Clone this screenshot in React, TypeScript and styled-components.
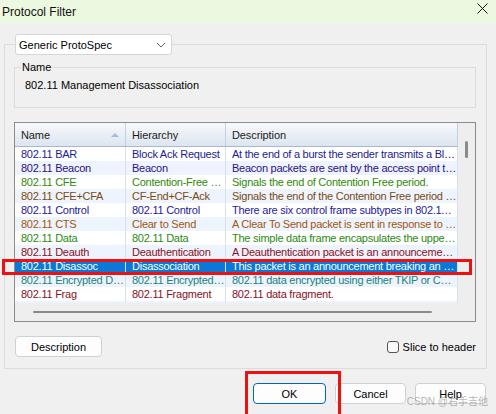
import React from 'react';
import styled, {createGlobalStyle} from 'styled-components';

const GlobalStyle = createGlobalStyle`
    html, body {
        margin: 0;
        padding: 0;
        background: #f0f0f0;
    }
    body {
        width: 496px;
        height: 414px;
        overflow: hidden;
        font-family: 'Liberation Sans', 'Noto Sans', sans-serif;
        color: #000;
    }
`;

type Row = {
    name: string;
    hierarchy: string;
    description: string;
    color: string;
    selected?: boolean;
};

const rows: Row[] = [
    {name: '802.11 BAR', hierarchy: 'Block Ack Request', description: 'At the end of a burst the sender transmits a Block Ack Request frame', color: '#1c1c96'},
    {name: '802.11 Beacon', hierarchy: 'Beacon', description: 'Beacon packets are sent by the access point to announce the network', color: '#2a0f8c'},
    {name: '802.11 CFE', hierarchy: 'Contention-Free End', description: 'Signals the end of Contention Free period.', color: '#2f8a0a'},
    {name: '802.11 CFE+CFA', hierarchy: 'CF-End+CF-Ack', description: 'Signals the end of the Contention Free period and acknowledges', color: '#7a4a12'},
    {name: '802.11 Control', hierarchy: '802.11 Control', description: 'There are six control frame subtypes in 802.11 networks', color: '#1e1aa0'},
    {name: '802.11 CTS', hierarchy: 'Clear to Send', description: 'A Clear To Send packet is sent in response to a Request To Send', color: '#a0560e'},
    {name: '802.11 Data', hierarchy: '802.11 Data', description: 'The simple data frame encapsulates the upper layer protocols', color: '#2a8a10'},
    {name: '802.11 Deauth', hierarchy: 'Deauthentication', description: 'A Deauthentication packet is an announcement breaking an association', color: '#8a1024'},
    {name: '802.11 Disassoc', hierarchy: 'Disassociation', description: 'This packet is an announcement breaking an association', color: '#fff', selected: true},
    {name: '802.11 Encrypted Data', hierarchy: '802.11 Encrypted Data', description: '802.11 data encrypted using either TKIP or CCMP', color: '#1a8282'},
    {name: '802.11 Frag', hierarchy: '802.11 Fragment', description: '802.11 data fragment.', color: '#8a1024'},
    {name: '802.11 Mgmt', hierarchy: '802.11 Management', description: 'There are several management frame subtypes in 802.11', color: '#8a1024'},
];

const ChevronDown = () => (
    <svg width="10" height="6" viewBox="0 0 10 6">
        <path d="M1 1l4 4 4-4" fill="none" stroke="#606060" strokeWidth="1"/>
    </svg>
);

const CloseIcon = () => (
    <svg width="11" height="11" viewBox="0 0 11 11">
        <path d="M0.5 0.5l10 10M10.5 0.5l-10 10" stroke="#111" strokeWidth="1"/>
    </svg>
);

const App = () => {
    return (
        <Dialog>
            <GlobalStyle/>
            <TitleBar>
                <Title>Protocol Filter</Title>
                <CloseButton><CloseIcon/></CloseButton>
            </TitleBar>
            <Body>
                <OuterGroup>
                    <ComboLegend>
                        <Combo>
                            <span>Generic ProtoSpec</span>
                            <ChevronDown/>
                        </Combo>
                    </ComboLegend>
                    <NameGroup>
                        <NameLegend>Name</NameLegend>
                        <NameValue>802.11 Management Disassociation</NameValue>
                    </NameGroup>
                    <ListFrame>
                        <ListMain>
                            <HeaderRow>
                                <HeaderCell>
                                    Name
                                    <SortArrow/>
                                </HeaderCell>
                                <HeaderCell>Hierarchy</HeaderCell>
                                <HeaderCell>Description</HeaderCell>
                            </HeaderRow>
                            {rows.map((r, i) => (
                                <DataRow
                                    key={r.name}
                                    $alt={i % 2 === 1}
                                    $selected={Boolean(r.selected)}
                                    $color={r.color}
                                >
                                    <Cell>{r.name}</Cell>
                                    <Cell>{r.hierarchy}</Cell>
                                    <Cell>{r.description}</Cell>
                                </DataRow>
                            ))}
                        </ListMain>
                        <VScroll>
                            <VThumb/>
                        </VScroll>
                        <HScroll>
                            <HThumb/>
                        </HScroll>
                        <Corner/>
                    </ListFrame>
                    <OptionsRow>
                        <PushButton $width={87}>Description</PushButton>
                        <CheckLabel>
                            <CheckBox/>
                            Slice to header
                        </CheckLabel>
                    </OptionsRow>
                </OuterGroup>
                <ButtonRow>
                    <PushButton $width={73} $default>OK</PushButton>
                    <PushButton $width={71}>Cancel</PushButton>
                    <PushButton $width={71}>Help</PushButton>
                </ButtonRow>
            </Body>
            <RowMark/>
            <OkMark/>
            <Watermark>CSDN @右手吉他</Watermark>
            <FaintMark>mao.zhang 2025-12-15</FaintMark>
        </Dialog>
    );
};

export default App;

const Dialog = styled.div`
    position: relative;
    width: 496px;
    height: 414px;
    display: flex;
    flex-direction: column;
    background: #f0f0f0;
    overflow: hidden;
`;

const TitleBar = styled.div`
    height: 23px;
    display: flex;
    align-items: center;
    justify-content: space-between;
    background: #edf8e0;
    padding: 0 8px 0 2px;
`;

const Title = styled.div`
    font-size: 12px;
    color: #111;
`;

const CloseButton = styled.div`
    display: flex;
    align-items: center;
    margin-top: -6px;
`;

const Body = styled.div`
    display: flex;
    flex-direction: column;
    padding: 11px 9px 0 4px;
`;

const OuterGroup = styled.fieldset`
    margin: 0;
    padding: 0 10px 11px 9px;
    border: 1px solid #dcdcdc;
    min-width: 0;
`;

const ComboLegend = styled.legend`
    padding: 0;
    margin-left: 1px;
`;

const Combo = styled.div`
    box-sizing: border-box;
    width: 157px;
    height: 21px;
    display: flex;
    align-items: center;
    justify-content: space-between;
    padding: 0 5px 0 3px;
    background: #fff;
    border: 1px solid #d6d6d6;
    border-radius: 3px;
    font-size: 11px;
`;

const NameGroup = styled.fieldset`
    margin: 5px 0 0 0;
    padding: 3px 0 14px 0;
    border: 1px solid #dcdcdc;
    min-width: 0;
`;

const NameLegend = styled.legend`
    padding: 0 1px;
    margin-left: 6px;
    font-size: 11px;
    line-height: 14px;
`;

const NameValue = styled.div`
    font-size: 11px;
    line-height: 16px;
    margin-left: 10px;
`;

const ListFrame = styled.div`
    margin-top: 14px;
    box-sizing: border-box;
    height: 200px;
    border: 1px solid #8c8c8c;
    background: #fff;
    display: grid;
    grid-template-columns: minmax(0, 1fr) 17px;
    grid-template-rows: minmax(0, 1fr) 18px;
    overflow: hidden;
`;

const ListMain = styled.div`
    overflow: hidden;
    min-width: 0;
    min-height: 0;
`;

const columns = '111px 100px 1fr';

const HeaderRow = styled.div`
    display: grid;
    grid-template-columns: ${columns};
    height: 23px;
    background: linear-gradient(#f7f9fc, #dde5f0);
    border-bottom: 1px solid #a9b8cf;
`;

const HeaderCell = styled.div`
    position: relative;
    display: flex;
    align-items: center;
    padding-left: 6px;
    font-size: 11px;
    letter-spacing: -0.1px;
    color: #1a1a1a;
    border-right: 1px solid #c5cfdd;
`;

const SortArrow = styled.span`
    position: absolute;
    right: 6px;
    top: 10px;
    width: 0;
    height: 0;
    border-left: 4px solid transparent;
    border-right: 4px solid transparent;
    border-bottom: 4px solid #a7bcd6;
`;

const DataRow = styled.div<{$alt: boolean; $selected: boolean; $color: string}>`
    display: grid;
    grid-template-columns: ${columns};
    height: 14px;
    background: ${({$alt, $selected}) => ($selected ? '#0a78d7' : $alt ? '#eef4fd' : '#fff')};
    color: ${({$color}) => $color};
`;

const Cell = styled.div`
    font-size: 11px;
    letter-spacing: -0.25px;
    line-height: 14px;
    padding-left: 6px;
    white-space: nowrap;
    overflow: hidden;
    text-overflow: ellipsis;
    border-right: 1px solid #d6e0ef;
`;

const VScroll = styled.div`
    background: #eeeeee;
    position: relative;
`;

const VThumb = styled.div`
    position: absolute;
    left: 7px;
    top: 18px;
    width: 3px;
    height: 17px;
    border-radius: 2px;
    background: #8a8a8a;
`;

const HScroll = styled.div`
    background: #eeeeee;
    display: flex;
    align-items: center;
    padding-left: 18px;
`;

const HThumb = styled.div`
    width: 399px;
    height: 2px;
    background: #8a8a8a;
    border-radius: 1px;
`;

const Corner = styled.div`
    background: #eeeeee;
`;

const OptionsRow = styled.div`
    display: flex;
    align-items: center;
    justify-content: space-between;
    margin-top: 14px;
    padding-left: 1px;
`;

const PushButton = styled.div<{$width: number; $default?: boolean}>`
    box-sizing: border-box;
    width: ${({$width}) => $width}px;
    height: 21px;
    display: flex;
    align-items: center;
    justify-content: center;
    font-size: 11px;
    background: #fdfdfd;
    border: 1px solid ${({$default}) => ($default ? '#0067c0' : '#d0d0d0')};
    border-radius: 4px;
`;

const CheckLabel = styled.label`
    display: flex;
    align-items: center;
    gap: 4px;
    font-size: 11px;
`;

const CheckBox = styled.span`
    box-sizing: border-box;
    width: 12px;
    height: 12px;
    border: 1px solid #555;
    border-radius: 3px;
    background: #fafafa;
`;

const ButtonRow = styled.div`
    display: flex;
    justify-content: flex-end;
    gap: 9px;
    margin-top: 14px;
    padding-right: 1px;
`;

const RowMark = styled.div`
    position: absolute;
    left: 2px;
    top: 259px;
    width: 470px;
    height: 16px;
    box-sizing: border-box;
    border: 3px solid #ee1111;
    pointer-events: none;
`;

const OkMark = styled.div`
    position: absolute;
    left: 245px;
    top: 371px;
    width: 96px;
    height: 50px;
    box-sizing: border-box;
    border: 3px solid #ee1111;
    pointer-events: none;
`;

const Watermark = styled.div`
    position: absolute;
    right: 8px;
    bottom: 6px;
    font-size: 10px;
    color: rgba(120, 120, 120, 0.55);
    font-family: 'Liberation Sans', 'Noto Sans CJK SC', sans-serif;
`;

const FaintMark = styled.div`
    position: absolute;
    left: 150px;
    top: 60px;
    font-size: 22px;
    font-weight: bold;
    color: rgba(0, 0, 0, 0.025);
    transform: rotate(-35deg);
    white-space: nowrap;
    pointer-events: none;
`;
